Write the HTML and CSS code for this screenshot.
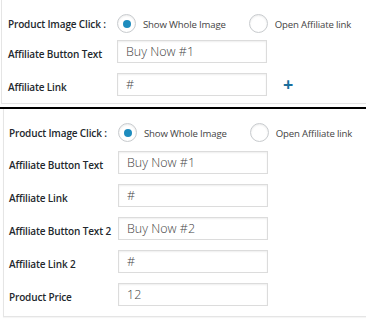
FILE: index.html
```html
<!DOCTYPE html>
<html lang="en">
<head>
  <meta charset="UTF-8" />
  <title>Affiliate Settings</title>
  <link rel="stylesheet" href="styles.css">
</head>
<body>

  <div class="panel panel-top">
    <div class="row radio-row">
      <label class="field-label">Product Image Click :</label>
      <div class="radios">
        <span class="radio checked"></span><span class="radio-text">Show Whole Image</span>
        <span class="radio"></span><span class="radio-text">Open Affiliate link</span>
      </div>
    </div>
    <div class="row">
      <label class="field-label">Affiliate Button Text</label>
      <input type="text" class="text-input" value="Buy Now #1" />
    </div>
    <div class="row">
      <label class="field-label">Affiliate Link</label>
      <input type="text" class="text-input" value="#" />
      <span class="add-btn">+</span>
    </div>
  </div>

  <div class="divider"></div>

  <div class="panel panel-bottom">
    <div class="row radio-row">
      <label class="field-label">Product Image Click :</label>
      <div class="radios">
        <span class="radio checked"></span><span class="radio-text">Show Whole Image</span>
        <span class="radio"></span><span class="radio-text">Open Affiliate link</span>
      </div>
    </div>
    <div class="row">
      <label class="field-label">Affiliate Button Text</label>
      <input type="text" class="text-input" value="Buy Now #1" />
    </div>
    <div class="row">
      <label class="field-label">Affiliate Link</label>
      <input type="text" class="text-input" value="#" />
    </div>
    <div class="row">
      <label class="field-label">Affiliate Button Text 2</label>
      <input type="text" class="text-input" value="Buy Now #2" />
    </div>
    <div class="row">
      <label class="field-label">Affiliate Link 2</label>
      <input type="text" class="text-input" value="#" />
    </div>
    <div class="row">
      <label class="field-label">Product Price</label>
      <input type="text" class="text-input" value="12" />
    </div>
  </div>

</body>
</html>
```

FILE: styles.css
```css
* {
  box-sizing: border-box;
  font-family: 'Open Sans', sans-serif;
}
body {
  margin: 0;
  background: #fff;
  width: 366px;
  height: 321px;
  overflow: hidden;
}
.panel {
  background: #fff;
  border-left: 1px solid #e5e5e5;
  border-bottom: 1px solid #e5e5e5;
  display: flex;
  flex-direction: column;
  gap: 10px;
}
.panel-top {
  margin-left: 1px;
  padding: 14px 0 6px 6px;
  height: 104px;
}
.panel-top .radio-row {
  margin-bottom: -3px;
}
.panel-bottom {
  margin-left: 3px;
  padding: 14px 0 8px 5px;
  height: 208px;
  box-shadow: 0 1px 1px rgba(0,0,0,0.04);
}
.divider {
  height: 2px;
  background: #000;
  margin-top: 3px;
}
.row {
  display: flex;
  align-items: center;
  height: 23px;
}
.radio-row {
  height: 19px;
  margin-bottom: -1px;
}
.field-label {
  width: 109px;
  flex: none;
  font-size: 10px;
  font-weight: 600;
  color: #23282d;
  padding-top: 5px;
  white-space: nowrap;
  letter-spacing: -0.15px;
}
.radio-row .field-label {
  padding-top: 1px;
}
.radios {
  display: flex;
  align-items: center;
}
.radio {
  width: 19px;
  height: 19px;
  border: 1px solid #c8cbce;
  border-radius: 50%;
  box-shadow: inset 0 1px 2px rgba(0,0,0,0.08);
  display: flex;
  align-items: center;
  justify-content: center;
  flex: none;
}
.radio.checked::before {
  content: "";
  width: 8px;
  height: 8px;
  border-radius: 50%;
  background: #1e8cbe;
}
.radio-text {
  font-size: 9.6px;
  color: #444;
  white-space: nowrap;
  letter-spacing: -0.15px;
  margin: 1px 23px 0 7px;
}
.text-input {
  width: 150px;
  height: 23px;
  margin: 0;
  padding: 0 8px;
  border: 1px solid #dcdcdc;
  box-shadow: inset 0 1px 2px rgba(0,0,0,0.07);
  font-size: 12.5px;
  font-weight: 300;
  color: #444;
  outline: none;
}
.add-btn {
  margin-left: 16px;
  font-size: 18px;
  font-weight: 700;
  color: #1b6f9c;
  line-height: 1;
  margin-top: -1px;
}
```
